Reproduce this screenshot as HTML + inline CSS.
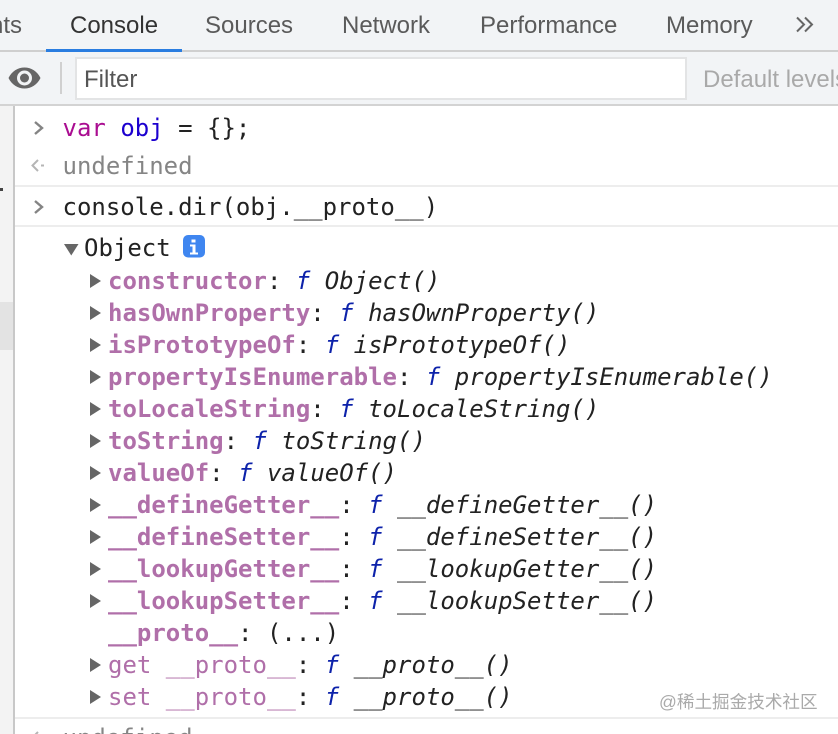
<!DOCTYPE html>
<html style="overflow:hidden;height:734px"><head><meta charset="utf-8">
<style>
html,body{margin:0;padding:0;background:#fff;}
body{width:838px;height:734px;overflow:hidden;position:relative;}
#w{position:relative;width:838px;height:734px;overflow:hidden;filter:blur(.35px);}
.a{position:absolute;white-space:pre;}
.t{font:24px/32px "Liberation Sans",sans-serif;color:#5a5a5a;top:10px;}
.m{font:24px/32px "DejaVu Sans Mono",monospace;color:#222;left:62.5px;}
.p{font:bold 24px/32px "DejaVu Sans Mono",monospace;color:#b06fa9;left:108px;}
.p b{color:#222;}
.p span{font-weight:normal;color:#222;}
.p i{font-weight:normal;font-style:italic;color:#222;}
.p i u{text-decoration:none;color:#0d22aa;}
.n{font-weight:normal;}
svg{position:absolute;overflow:visible;}
</style></head><body><div id="w">
<div class="a" style="left:0;top:0;width:838px;height:106px;background:#f2f4f6"></div>
<div class="a" style="left:0;top:50px;width:838px;height:2px;background:#cfcfcf"></div>
<div class="a" style="left:46px;top:49px;width:136px;height:3px;background:#2a7de0"></div>
<div class="a t" style="left:-10px">nts</div>
<div class="a t" style="left:70px;color:#333">Console</div>
<div class="a t" style="left:205px">Sources</div>
<div class="a t" style="left:342px">Network</div>
<div class="a t" style="left:480px">Performance</div>
<div class="a t" style="left:666px">Memory</div>
<svg style="left:796px;top:16px" width="18" height="18" viewBox="0 0 18 18"><path d="M1 1.500l7 7-7 7M9 1.500l7 7-7 7" fill="none" stroke="#666" stroke-width="2"/></svg>

<svg style="left:8px;top:66px" width="33" height="24" viewBox="0 0 33 24"><path d="M0.500 12C4 5 10 1.500 16.500 1.500S29 5 32.500 12C29 19 23 22.500 16.500 22.500S4 19 .5 12Z" fill="#666"/><circle cx="16.500" cy="12" r="7.500" fill="#f2f4f6"/><circle cx="16.500" cy="12" r="4.500" fill="#666"/></svg>
<div class="a" style="left:60px;top:62px;width:2px;height:32px;background:#d0d0d0"></div>
<div class="a" style="left:75px;top:57px;width:608px;height:39px;background:#fff;border:2px solid #e3e4e5"></div>
<div class="a t" style="left:84px;top:64px;color:#555">Filter</div>
<div class="a t" style="left:703px;top:64px;color:#a9a9a9">Default levels</div>
<div class="a" style="left:0;top:104px;width:838px;height:2px;background:#d3d3d3"></div>

<div class="a" style="left:0;top:106px;width:13px;height:628px;background:#f3f3f3"></div>
<div class="a" style="left:0;top:302px;width:13px;height:48px;background:#e3e3e3"></div>
<div class="a" style="left:13px;top:106px;width:2px;height:628px;background:#c8c8c8"></div>
<div class="a" style="left:0;top:188px;width:3px;height:3px;background:#444"></div>

<div class="a" style="left:15px;top:185px;width:823px;height:2px;background:#ededed"></div>
<div class="a" style="left:15px;top:225px;width:823px;height:2px;background:#ededed"></div>
<div class="a" style="left:15px;top:717px;width:823px;height:2px;background:#ededed"></div>

<svg style="left:33px;top:120px" width="12" height="16" viewBox="0 0 12 16"><path d="M2 2l7 6-7 6" fill="none" stroke="#848484" stroke-width="2.400"/></svg>
<svg style="left:30px;top:157px" width="16" height="16" viewBox="0 0 16 16"><path d="M8 3L2.500 8.500 8 14" fill="none" stroke="#b5b5b5" stroke-width="2"/><rect x="11" y="7.500" width="3" height="2" fill="#b5b5b5"/></svg>
<svg style="left:33px;top:199px" width="12" height="16" viewBox="0 0 12 16"><path d="M2 2l7 6-7 6" fill="none" stroke="#848484" stroke-width="2.400"/></svg>

<div class="a m" style="top:112px"><span style="color:#aa0d91">var</span> <span style="color:#1c00cf">obj</span> = {};</div>
<div class="a m" style="top:150px;color:#858585">undefined</div>
<div class="a m" style="top:191px">console.dir(obj.__proto__)</div>
<svg style="left:64px;top:244px" width="15" height="12" viewBox="0 0 15 12"><path d="M0 0H14.500L7.250 11.500Z" fill="#666"/></svg>
<div class="a m" style="top:232px;left:84px">Object</div>
<svg style="left:183px;top:235px" width="22" height="23" viewBox="0 0 22 23"><rect width="22" height="22.500" rx="5" fill="#3f86f0"/><path d="M8.500 4.500h4v3h-4zM7 9.500h5.500v8H15v2H7v-2h2.500v-6H7z" fill="#fff"/></svg>

<svg style="left:90px;top:273px" width="12" height="448" viewBox="0 0 12 448"><g fill="#666"><path d="M0 1l11 7-11 7z"/><path d="M0 33l11 7-11 7z"/><path d="M0 65l11 7-11 7z"/><path d="M0 97l11 7-11 7z"/><path d="M0 129l11 7-11 7z"/><path d="M0 161l11 7-11 7z"/><path d="M0 193l11 7-11 7z"/><path d="M0 225l11 7-11 7z"/><path d="M0 257l11 7-11 7z"/><path d="M0 289l11 7-11 7z"/><path d="M0 321l11 7-11 7z"/><path d="M0 385l11 7-11 7z"/><path d="M0 417l11 7-11 7z"/></g></svg>

<div class="a p" style="top:265px">constructor<b class="n">: </b><i><u>f</u> Object()</i></div>
<div class="a p" style="top:297px">hasOwnProperty<b class="n">: </b><i><u>f</u> hasOwnProperty()</i></div>
<div class="a p" style="top:329px">isPrototypeOf<b class="n">: </b><i><u>f</u> isPrototypeOf()</i></div>
<div class="a p" style="top:361px">propertyIsEnumerable<b class="n">: </b><i><u>f</u> propertyIsEnumerable()</i></div>
<div class="a p" style="top:393px">toLocaleString<b class="n">: </b><i><u>f</u> toLocaleString()</i></div>
<div class="a p" style="top:425px">toString<b class="n">: </b><i><u>f</u> toString()</i></div>
<div class="a p" style="top:457px">valueOf<b class="n">: </b><i><u>f</u> valueOf()</i></div>
<div class="a p" style="top:489px">__defineGetter__<b class="n">: </b><i><u>f</u> __defineGetter__()</i></div>
<div class="a p" style="top:521px">__defineSetter__<b class="n">: </b><i><u>f</u> __defineSetter__()</i></div>
<div class="a p" style="top:553px">__lookupGetter__<b class="n">: </b><i><u>f</u> __lookupGetter__()</i></div>
<div class="a p" style="top:585px">__lookupSetter__<b class="n">: </b><i><u>f</u> __lookupSetter__()</i></div>
<div class="a p" style="top:617px">__proto__<b class="n">: </b><span>(...)</span></div>
<div class="a p n" style="top:649px">get __proto__<b class="n">: </b><i><u>f</u> __proto__()</i></div>
<div class="a p n" style="top:681px">set __proto__<b class="n">: </b><i><u>f</u> __proto__()</i></div>

<div class="a m" style="top:722px;color:#858585">undefined</div>
<svg style="left:30px;top:729px" width="16" height="16" viewBox="0 0 16 16"><path d="M8 3L2.500 8.500 8 14" fill="none" stroke="#b5b5b5" stroke-width="2"/></svg>

<div class="a" style="left:659px;top:691px;font:17.600px/22px 'Liberation Sans','Noto Sans CJK SC',sans-serif;color:#aaa;background:transparent">@稀土掘金技术社区</div>
</div></body></html>
